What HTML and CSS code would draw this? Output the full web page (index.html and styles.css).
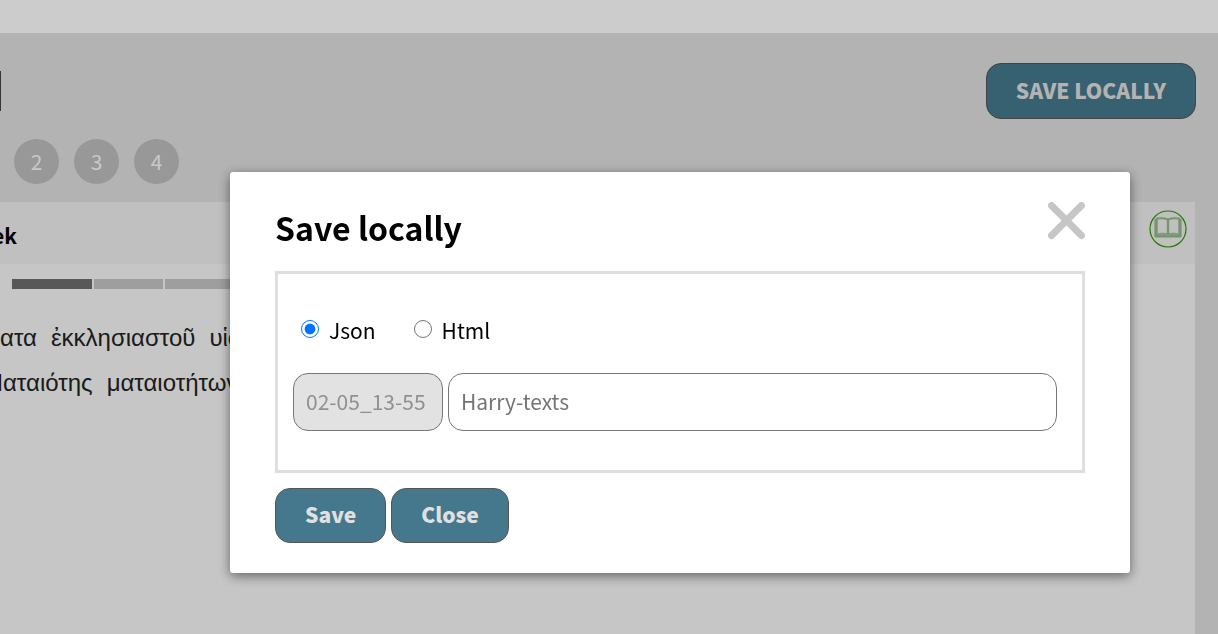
FILE: index.html
```html
<!DOCTYPE html>
<html lang="en">
<head>
<meta charset="utf-8">
<title>Save locally</title>
<link rel="stylesheet" href="styles.css">
</head>
<body>
<div class="page">
  <header class="topbar"></header>
  <main class="workspace">
    <div class="toolbar">
      <span class="tab-edge"></span>
      <button class="button button-large" type="button">SAVE LOCALLY</button>
    </div>
    <nav class="steps">
      <button class="step" type="button">2</button>
      <button class="step" type="button">3</button>
      <button class="step" type="button">4</button>
    </nav>
    <section class="panel">
      <div class="panel-head">
        <h2 class="panel-title">ek</h2>
        <button class="book" type="button" aria-label="Open book">
          <svg viewBox="0 0 38 38" width="38" height="38" fill="none">
            <circle cx="19" cy="19" r="18" stroke="#34980c" stroke-width="1.2"/>
            <g stroke="#92bc8a" stroke-linejoin="round">
              <path d="M7 9V26H31V9" stroke-width="3.2"/>
              <path d="M8 8.500Q14 7.500 19 9.500Q24 7.500 30 8.500V24.500Q24 23 19 24.500Q14 23 8 24.500Z" stroke-width="2"/>
              <path d="M19 9.500V25" stroke-width="2.400"/>
            </g>
            <path d="M8.500 10V24Q14 23.500 19 25Q24 23.500 29.500 24V10" stroke="#c2d4be" stroke-width=".6"/>
          </svg>
        </button>
      </div>
      <div class="progress"><i class="bar bar-on"></i><i class="bar"></i><i class="bar"></i></div>
      <div class="verse">
        <p class="line"><span>ατα</span><span>ἐκκλησιαστοῦ</span><span>υἱοῦ</span></p>
        <p class="line line-cut"><span>Ματαιότης</span><span>ματαιοτήτων</span></p>
      </div>
    </section>
  </main>
</div>
<div class="overlay">
  <form class="dialog" role="dialog" aria-labelledby="dialog-title">
    <div class="dialog-head">
      <h1 class="dialog-title" id="dialog-title">Save locally</h1>
      <button class="dismiss" type="button" aria-label="Dismiss">
        <svg viewBox="0 0 38 38" width="38" height="38"><path d="M4.500 3.500L34.500 33.500M34.500 3.500L4.500 33.500" stroke="#c6c6c6" stroke-width="7" stroke-linecap="round"/></svg>
      </button>
    </div>
    <div class="fields">
      <div class="formats">
        <label class="format"><input class="radio" type="radio" name="format" checked>Json</label>
        <label class="format"><input class="radio" type="radio" name="format">Html</label>
      </div>
      <div class="names">
        <input class="text stamp" type="text" value="02-05_13-55" aria-label="Timestamp" disabled>
        <input class="text filename" type="text" placeholder="Harry-texts" aria-label="File name">
      </div>
    </div>
    <div class="actions">
      <button class="button" type="button">Save</button>
      <button class="button" type="button">Close</button>
    </div>
  </form>
</div>
</body>
</html>
```

FILE: styles.css
```css
* { box-sizing: border-box; }
body {
  margin: 0;
  font: 21px/30px "Noto Sans CJK SC", sans-serif;
  color: #000;
  background: #fff;
  overflow: hidden;
}
button, input { font: inherit; margin: 0; }
button { padding: 0; border: 0; background: none; }
.page { display: flex; flex-direction: column; min-height: 100vh; overflow: hidden; }
.topbar { height: 33px; background: #fff; }
.workspace {
  flex: 1;
  display: flex;
  flex-direction: column;
  padding: 30px 22px 0 0;
  background: #e0e0e0;
}
.toolbar { display: flex; justify-content: space-between; align-items: center; }
.tab-edge { width: 1px; height: 40px; background: #444; }
.button {
  height: 55px;
  padding: 0 29px 3px;
  border: 1px solid #555;
  border-radius: 15px;
  background: #45788c;
  color: #e0e0e0;
  font-weight: 900;
}
.button-large { height: 56px; }
.steps { display: flex; gap: 15px; padding: 20px 0 18px 14px; }
.step {
  width: 45px;
  height: 45px;
  padding-bottom: 2px;
  border-radius: 50%;
  background: #bebebe;
  color: #fafafa;
}
.panel { flex: 1; margin-right: 1px; background: #f8f8f8; overflow: hidden; }
.panel-head {
  display: flex;
  justify-content: space-between;
  align-items: center;
  height: 62px;
  padding-right: 8px;
  background: #f0f0f0;
}
.panel-title { margin: 4px 0 0 -8px; font-size: 21px; font-weight: 700; }
.book, .dismiss { line-height: 0; }
.book { margin-bottom: 8px; }
.progress { display: flex; gap: 2px; padding: 15px 0 0 12px; }
.bar { width: 69px; height: 10px; background: #c6c6c6; }
.bar-on { width: 80px; background: #6e6e6e; }
.verse { padding-top: 26px; font: 24px/45px "Liberation Sans", Arial, sans-serif; color: #222; }
.line { display: flex; gap: 14px; margin: 0; white-space: nowrap; }
.line-cut { margin-left: -17px; }
.overlay {
  position: fixed;
  inset: 0;
  padding: 172px 88px 0 230px;
  background: rgba(0, 0, 0, .2);
}
.dialog {
  padding: 30px 45px;
  border-radius: 3px;
  background: #fff;
  box-shadow: 0 3px 12px rgba(0, 0, 0, .5);
}
.dialog-head { display: flex; justify-content: space-between; align-items: flex-start; }
.dialog-title { margin: 0 0 19px; font-size: 32px; line-height: 50px; font-weight: 700; }
.fields { padding: 39px 25px 39px 15px; border: 3px solid #dedede; }
.formats { display: flex; gap: 38px; padding-left: 8px; margin-bottom: 25px; line-height: 35px; }
.format { display: flex; align-items: center; }
.radio { width: 18px; height: 18px; margin: 0 10px 4px 0; }
.names { display: flex; gap: 5px; }
.text {
  height: 58px;
  padding: 0 12px 2px;
  border: 1px solid #767676;
  border-radius: 15px;
  background: #fff;
  min-width: 0;
}
.text::placeholder { color: #757575; }
.stamp { width: 150px; background: #e2e2e2; color: #909090; }
.filename { flex: 1; }
.actions { display: flex; gap: 5px; margin-top: 15px; }
```
